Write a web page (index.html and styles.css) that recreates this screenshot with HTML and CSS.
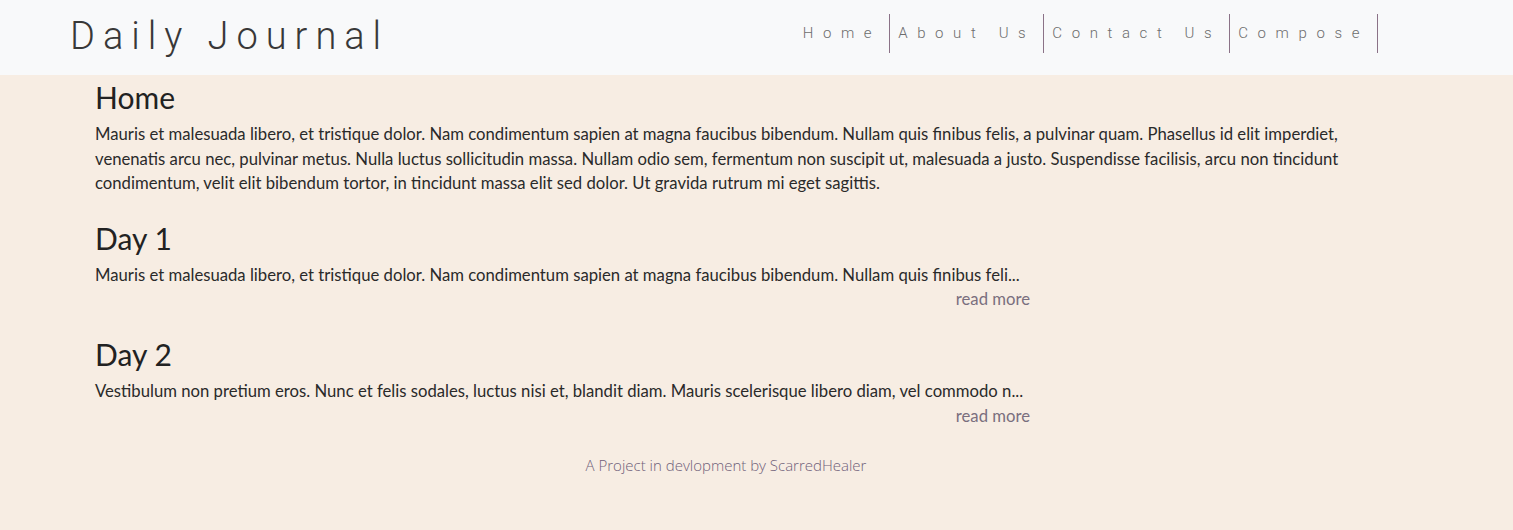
FILE: index.html
```html
<!DOCTYPE html>
<html lang="en">
<head>
<meta charset="utf-8">
<title>Daily Journal</title>
<link rel="stylesheet" href="styles.css">
</head>
<body>
<header class="navbar">
  <a class="brand" href="#">Daily Journal</a>
  <nav class="nav">
    <a class="nav-link" href="#">Home</a>
    <a class="nav-link" href="#">About Us</a>
    <a class="nav-link" href="#">Contact Us</a>
    <a class="nav-link" href="#">Compose</a>
  </nav>
</header>
<div class="container">
  <main class="content">
    <section class="intro">
      <h1 class="title">Home</h1>
      <p class="text">Mauris et malesuada libero, et tristique dolor. Nam condimentum sapien at magna faucibus bibendum. Nullam quis finibus felis, a pulvinar quam. Phasellus id elit imperdiet, venenatis arcu nec, pulvinar metus. Nulla luctus sollicitudin massa. Nullam odio sem, fermentum non suscipit ut, malesuada a justo. Suspendisse facilisis, arcu non tincidunt condimentum, velit elit bibendum tortor, in tincidunt massa elit sed dolor. Ut gravida rutrum mi eget sagittis.</p>
    </section>
    <article class="post">
      <h1 class="title">Day 1</h1>
      <p class="text">Mauris et malesuada libero, et tristique dolor. Nam condimentum sapien at magna faucibus bibendum. Nullam quis finibus feli...</p>
      <a class="more" href="#">read more</a>
    </article>
    <article class="post">
      <h1 class="title">Day 2</h1>
      <p class="text">Vestibulum non pretium eros. Nunc et felis sodales, luctus nisi et, blandit diam. Mauris scelerisque libero diam, vel commodo n...</p>
      <a class="more" href="#">read more</a>
    </article>
  </main>
  <footer class="footer">A Project in devlopment by ScarredHealer</footer>
</div>
</body>
</html>
```

FILE: styles.css
```css
* { box-sizing: border-box; }
html, body { margin: 0; padding: 0; }
body {
  background: #f7ede3;
  font-family: "Lato", "Open Sans", sans-serif;
  color: #2a2a2a;
}
.navbar {
  height: 75px;
  background: #f8f9fa;
  display: flex;
  align-items: center;
  padding: 0 0 0 70px;
}
.brand {
  font-family: "Roboto", sans-serif;
  font-weight: 300;
  font-size: 38px;
  letter-spacing: 0.21em;
  color: #383838;
  text-decoration: none;
  padding-bottom: 4px;
}
.nav {
  display: flex;
  margin-left: auto;
  margin-right: 135px;
  align-items: center;
}
.nav-link {
  font-family: "Roboto", sans-serif;
  font-weight: 300;
  font-size: 15px;
  letter-spacing: 0.64em;
  color: #6d6d6d;
  text-decoration: none;
  padding: 0 8px;
  height: 39px;
  line-height: 39px;
  border-right: 1px solid #8b7287;
  margin-top: -8px;
}
.container {
  margin-left: 95px;
  width: 1262px;
}
.content {
  padding-top: 5px;
}
.title {
  font-size: 30px;
  font-weight: 400;
  margin: 0 0 8px;
  line-height: 34px;
  color: #222;
}
.text {
  font-size: 16.7px;
  line-height: 24.5px;
  margin: 0;
}
.intro { margin-bottom: 25px; }
.post {
  width: 935px;
  display: flex;
  flex-direction: column;
  margin-bottom: 26px;
}
.more {
  align-self: flex-end;
  font-size: 16.7px;
  line-height: 24px;
  color: #7a6f7e;
  text-decoration: none;
}
.footer {
  text-align: center;
  font-family: "Open Sans", sans-serif;
  font-weight: 300;
  font-size: 15px;
  color: #6f6079;
  padding-top: 1px;
}
```
